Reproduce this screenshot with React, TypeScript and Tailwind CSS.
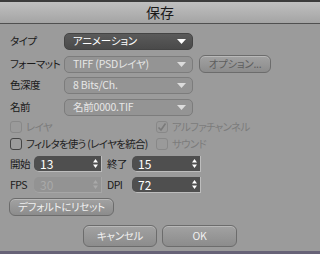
import React from 'react';

const font = "font-['Noto_Sans_CJK_JP',sans-serif] [font-feature-settings:'palt']";

const Arrow = ({ color = '#ffffff' }: { color?: string }) => (
    <svg width="9" height="5" viewBox="0 0 9 5" className="shrink-0">
        <path d="M0 0 H9 L4.5 5 Z" fill={color} />
    </svg>
);

const Spinner = ({ color = '#ffffff' }: { color?: string }) => (
    <svg width="5" height="9" viewBox="0 0 5 9" className="shrink-0">
        <path d="M0 3.5 L2.5 0 L5 3.5 Z" fill={color} />
        <path d="M0 5.5 H5 L2.5 9 Z" fill={color} />
    </svg>
);

const Label = ({ text, w }: { text: string; w: string }) => (
    <span className={`${w} shrink-0 whitespace-nowrap text-[10.5px] tracking-[-0.5px] leading-none text-[#1a1a1a]`}>
        {text}
    </span>
);

const Select = ({ value, disabled }: { value: string; disabled?: boolean }) => (
    <div
        className={`w-[129px] h-[17px] shrink-0 rounded-[5px] flex items-center justify-between pl-[8px] pr-[6px] text-[10.5px] tracking-[-0.2px] leading-none whitespace-nowrap ${
            disabled
                ? 'bg-[#949494] border border-[#7c7c7c] text-[#e6e6e6]'
                : 'bg-gradient-to-b from-[#5a5a5a] to-[#4a4a4a] border border-[#444] text-white'
        }`}
    >
        <span>{value}</span>
        <Arrow color={disabled ? '#dcdcdc' : '#ffffff'} />
    </div>
);

const NumField = ({ value, disabled, w }: { value: string; disabled?: boolean; w: string }) => (
    <div
        className={`${w} h-[16px] shrink-0 rounded-l-[5px] flex items-center justify-between pl-[6px] pr-[3px] text-[12px] leading-none ${
            disabled
                ? 'bg-[#939393] text-[#a9a9a9] border-b border-r border-[#a6a6a6]'
                : 'bg-[#4f4f4f] text-white border-b border-r border-[#bdbdbd]'
        }`}
    >
        <span>{value}</span>
        <Spinner color={disabled ? '#a9a9a9' : '#ffffff'} />
    </div>
);

const Check = ({ checked, disabled, label }: { checked?: boolean; disabled?: boolean; label: string }) => (
    <div className="flex items-center gap-[4px] whitespace-nowrap">
        <div
            className={`w-[12px] h-[12px] shrink-0 rounded-[3px] border flex items-center justify-center ${
                disabled ? 'border-[#888] bg-[#9a9a9a]' : 'border-[#444] bg-[#9c9c9c]'
            }`}
        >
            {checked && (
                <svg width="10" height="10" viewBox="0 0 10 10">
                    <path d="M1.5 5.5 L4 8 L8.5 1.5" stroke="#7a7a7a" strokeWidth="1.6" fill="none" />
                </svg>
            )}
        </div>
        <span className={`text-[10.5px] leading-none tracking-[-0.7px] ${disabled ? 'text-[#7c7c7c]' : 'text-[#1e1e1e]'}`}>
            {label}
        </span>
    </div>
);

const Button = ({ label, w, h, dim }: { label: string; w: string; h: string; dim?: boolean }) => (
    <div
        className={`${w} ${h} shrink-0 whitespace-nowrap rounded-[6px] border border-[#6c6c6c] bg-gradient-to-b from-[#a2a2a2] to-[#8c8c8c] flex items-center justify-center text-[10.5px] tracking-[-0.3px] leading-none shadow-[inset_0_1px_0_rgba(255,255,255,0.25)] ${
            dim ? 'text-[#5e5e5e]' : 'text-[#f0f0f0]'
        }`}
    >
        {label}
    </div>
);

export default function App() {
    return (
        <div className={`w-[320px] h-[254px] bg-[#9b9b9b] flex flex-col overflow-hidden ${font}`}>
            <div className="h-[2px] bg-[#3c3c3c]" />
            <div className="h-[22px] bg-gradient-to-b from-[#c0c0c0] to-[#a4a4a4] border-b border-[#505050] flex items-center justify-center text-[14px] text-[#1a1a1a]">
                保存
            </div>

            <div className="flex flex-col pl-[10px] pt-[9px]">
                <div className="flex items-center h-[17px]">
                    <Label text="タイプ" w="w-[54px]" />
                    <Select value="アニメーション" />
                </div>
                <div className="flex items-center h-[18px] mt-[5px]">
                    <Label text="フォーマット" w="w-[54px]" />
                    <Select value="TIFF (PSDレイヤ)" disabled />
                    <div className="ml-[6px]">
                        <Button label="オプション..." w="w-[72px]" h="h-[18px]" dim />
                    </div>
                </div>
                <div className="flex items-center h-[17px] mt-[4px]">
                    <Label text="色深度" w="w-[54px]" />
                    <Select value="8 Bits/Ch." disabled />
                </div>
                <div className="flex items-center h-[17px] mt-[5px]">
                    <Label text="名前" w="w-[54px]" />
                    <Select value="名前0000.TIF" disabled />
                </div>

                <div className="flex items-center h-[12px] mt-[5px]">
                    <div className="w-[146px] shrink-0">
                        <Check label="レイヤ" disabled />
                    </div>
                    <Check label="アルファチャンネル" checked disabled />
                </div>
                <div className="flex items-center h-[12px] mt-[5px]">
                    <div className="w-[146px] shrink-0">
                        <Check label="フィルタを使う (レイヤを統合)" />
                    </div>
                    <Check label="サウンド" disabled />
                </div>

                <div className="flex items-center h-[16px] mt-[6px]">
                    <Label text="開始" w="w-[24px]" />
                    <NumField value="13" w="w-[68px]" />
                    <span className="ml-[5px]" />
                    <Label text="終了" w="w-[25px]" />
                    <NumField value="15" w="w-[69px]" />
                </div>
                <div className="flex items-center h-[16px] mt-[5px]">
                    <Label text="FPS" w="w-[24px]" />
                    <NumField value="30" w="w-[68px]" disabled />
                    <span className="ml-[5px]" />
                    <Label text="DPI" w="w-[25px]" />
                    <NumField value="72" w="w-[69px]" />
                </div>

                <div className="mt-[5px] -ml-[1px]">
                    <Button label="デフォルトにリセット" w="w-[105px]" h="h-[18px]" />
                </div>
            </div>

            <div className="flex justify-center gap-[5px] mt-[9px]">
                <Button label="キャンセル" w="w-[74px]" h="h-[22px]" />
                <Button label="OK" w="w-[75px]" h="h-[22px]" />
            </div>
            <div className="flex-1" />
            <div className="h-[3px] bg-[#676277]" />
        </div>
    );
}
